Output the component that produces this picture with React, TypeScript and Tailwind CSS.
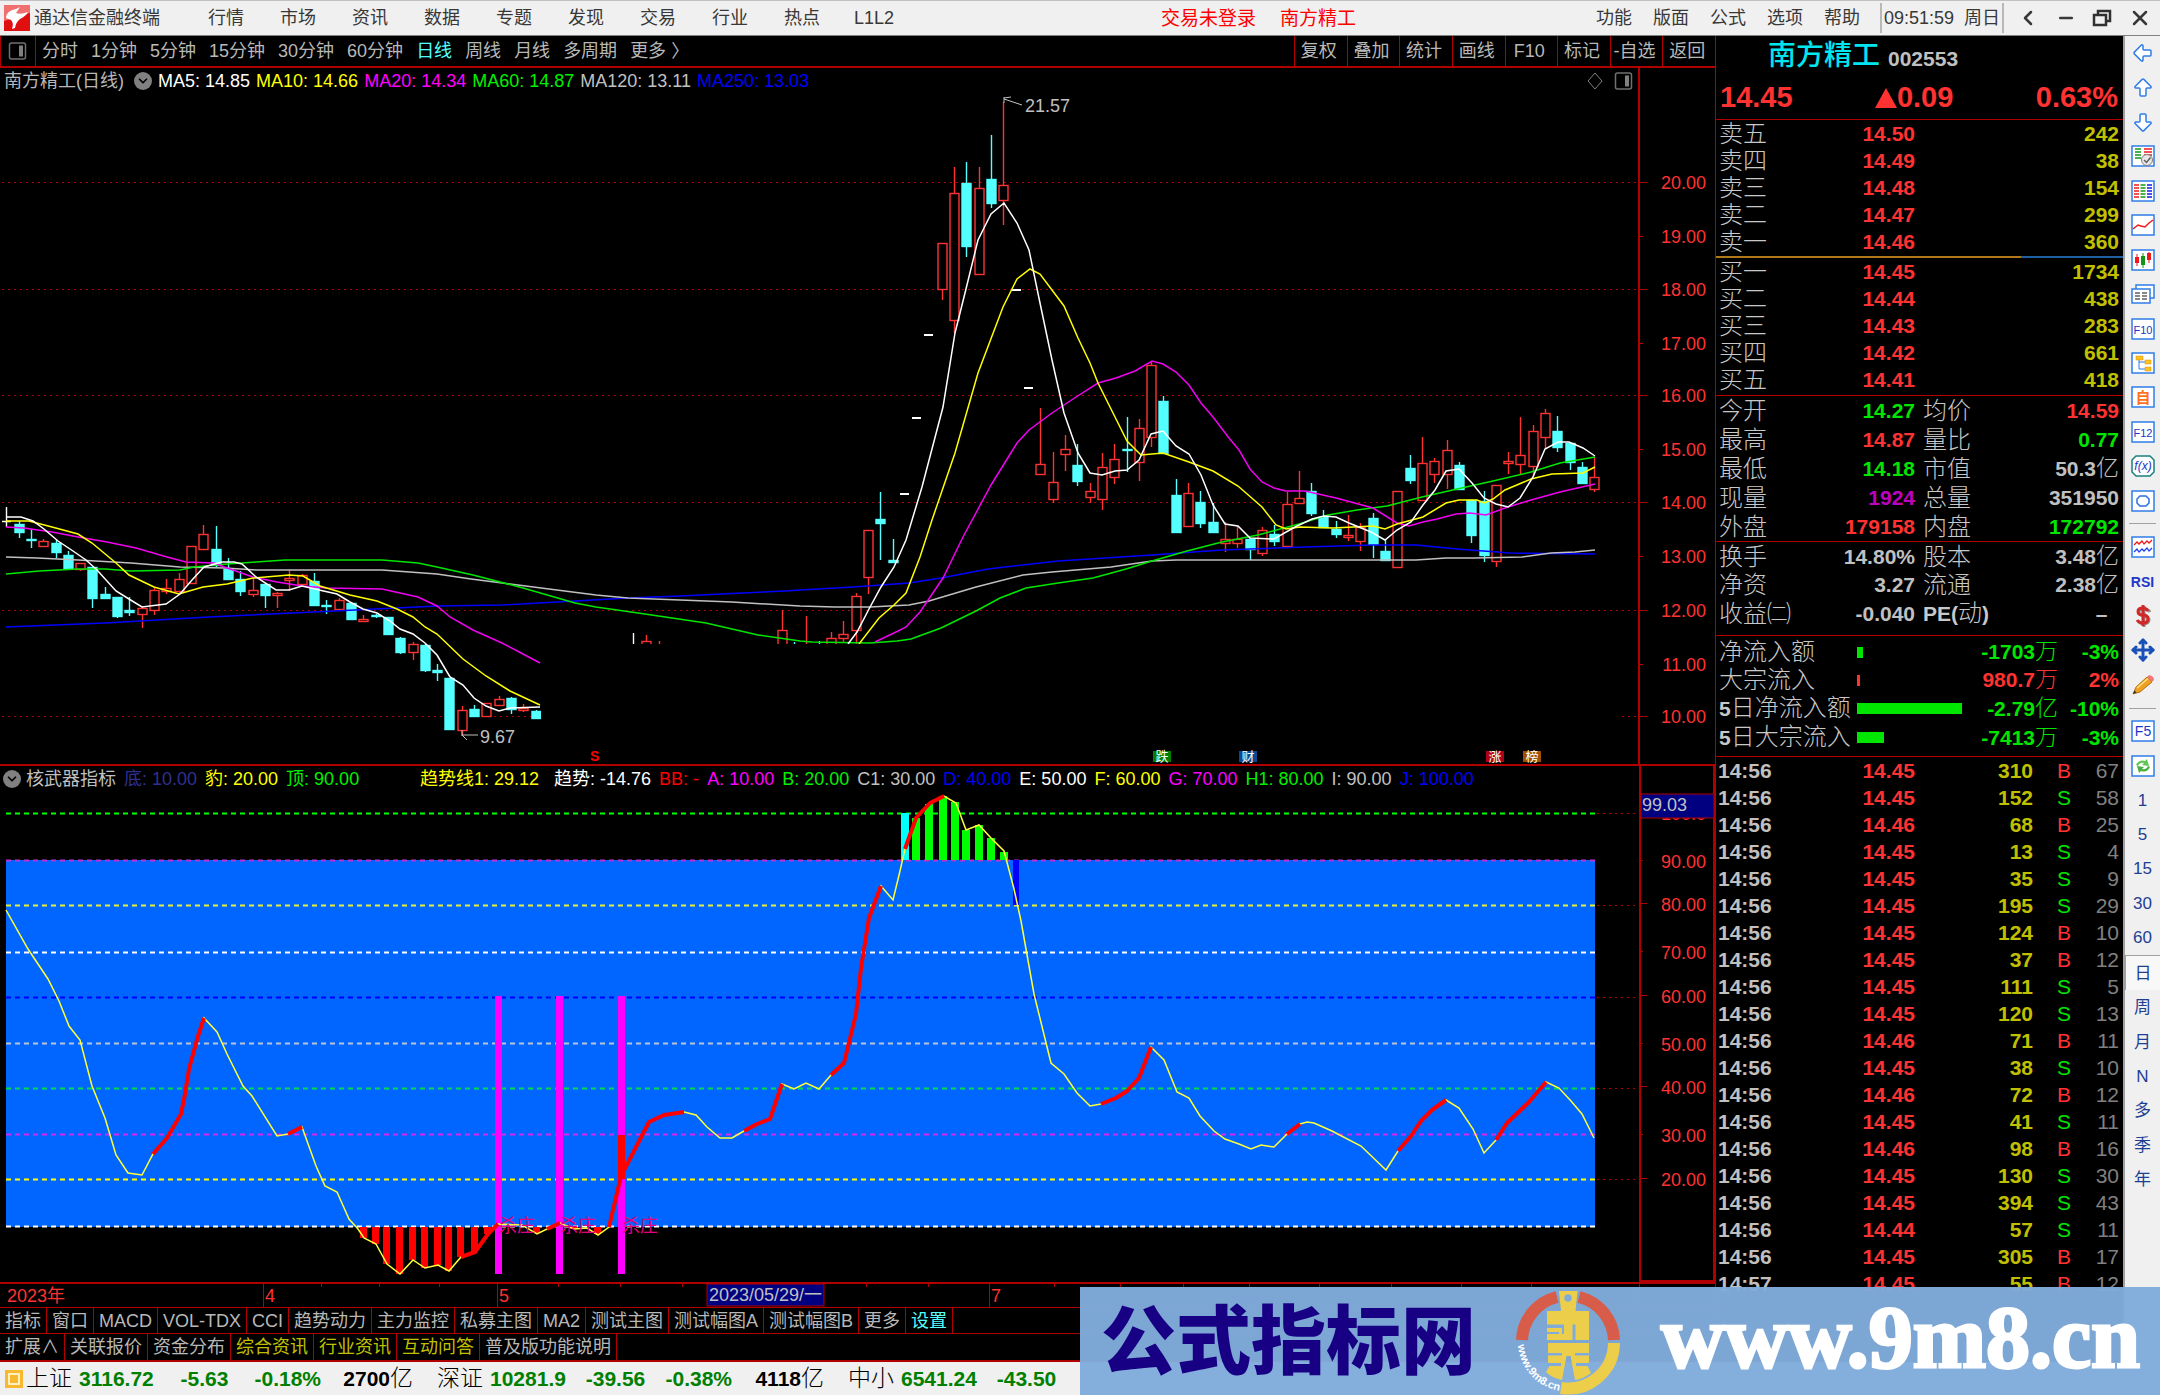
import type { ReactNode } from "react";
import { ArrowBigDown, ArrowBigLeft, ArrowBigUp, ChevronDown, ChevronLeft, Minus, Move, X } from "lucide-react";

const menuItems = ["行情", "市场", "资讯", "数据", "专题", "发现", "交易", "行业", "热点", "L1L2"];
const rightMenu = ["功能", "版面", "公式", "选项", "帮助"];
const periods = ["分时", "1分钟", "5分钟", "15分钟", "30分钟", "60分钟", "日线", "周线", "月线", "多周期", "更多 〉"];
const chartActions = ["复权", "叠加", "统计", "画线", "F10", "标记", "-自选", "返回"];

const maLegend = [
  { text: "MA5: 14.85", color: "text-white" },
  { text: "MA10: 14.66", color: "text-[#ffff00]" },
  { text: "MA20: 14.34", color: "text-[#ff00ff]" },
  { text: "MA60: 14.87", color: "text-[#00f000]" },
  { text: "MA120: 13.11", color: "text-[#c0c0c0]" },
  { text: "MA250: 13.03", color: "text-[#0000ff]" },
];

const indicatorLegend = [
  { text: "趋势线1: 29.12", color: "pr-[7px] text-[#ffff00]" },
  { text: "趋势: -14.76", color: "text-white" },
  { text: "BB: -", color: "text-[#ff0000]" },
  { text: "A: 10.00", color: "text-[#ff00ff]" },
  { text: "B: 20.00", color: "text-[#00f000]" },
  { text: "C1: 30.00", color: "text-[#c0c0c0]" },
  { text: "D: 40.00", color: "text-[#0000ff]" },
  { text: "E: 50.00", color: "text-white" },
  { text: "F: 60.00", color: "text-[#ffff00]" },
  { text: "G: 70.00", color: "text-[#ff00ff]" },
  { text: "H1: 80.00", color: "text-[#00f000]" },
  { text: "I: 90.00", color: "text-[#c0c0c0]" },
  { text: "J: 100.00", color: "text-[#0000ff]" },
];

const indicatorTabs = ["指标", "窗口", "MACD", "VOL-TDX", "CCI", "趋势动力", "主力监控", "私募主图", "MA2", "测试主图", "测试幅图A", "测试幅图B", "更多", "设置"];
const infoTabs = ["扩展∧", "关联报价", "资金分布", "综合资讯", "行业资讯", "互动问答", "普及版功能说明"];

const RED = "text-[#ff3232]";
const GREEN = "text-[#00e600]";
const GREY = "text-[#c0c0c0]";
const YELLOW = "text-[#c0c000]";

const sells = [
  ["卖五", "14.50", "242"],
  ["卖四", "14.49", "38"],
  ["卖三", "14.48", "154"],
  ["卖二", "14.47", "299"],
  ["卖一", "14.46", "360"],
];
const buys = [
  ["买一", "14.45", "1734"],
  ["买二", "14.44", "438"],
  ["买三", "14.43", "283"],
  ["买四", "14.42", "661"],
  ["买五", "14.41", "418"],
];

type StatRow = [string, string, string, string, string, string];
const stats: StatRow[] = [
  ["今开", "14.27", GREEN, "均价", "14.59", RED],
  ["最高", "14.87", RED, "量比", "0.77", GREEN],
  ["最低", "14.18", GREEN, "市值", "50.3亿", GREY],
  ["现量", "1924", "text-[#c000c0]", "总量", "351950", GREY],
  ["外盘", "179158", RED, "内盘", "172792", GREEN],
];
const fundamentals: StatRow[] = [
  ["换手", "14.80%", GREY, "股本", "3.48亿", GREY],
  ["净资", "3.27", GREY, "流通", "2.38亿", GREY],
  ["收益㈡", "-0.040", GREY, "PE(动)", "–  ", GREY],
];
const flows = [
  { label: "净流入额", width: 6, value: "-1703万", pct: "-3%", up: false },
  { label: "大宗流入", width: 3, value: "980.7万", pct: "2%", up: true },
  { label: "5日净流入额", width: 105, value: "-2.79亿", pct: "-10%", up: false },
  { label: "5日大宗流入", width: 27, value: "-7413万", pct: "-3%", up: false },
];
const ticks: [string, string, string, string, string][] = [
  ["14:56", "14.45", "310", "B", "67"],
  ["14:56", "14.45", "152", "S", "58"],
  ["14:56", "14.46", "68", "B", "25"],
  ["14:56", "14.45", "13", "S", "4"],
  ["14:56", "14.45", "35", "S", "9"],
  ["14:56", "14.45", "195", "S", "29"],
  ["14:56", "14.45", "124", "B", "10"],
  ["14:56", "14.45", "37", "B", "12"],
  ["14:56", "14.45", "111", "S", "5"],
  ["14:56", "14.45", "120", "S", "13"],
  ["14:56", "14.46", "71", "B", "11"],
  ["14:56", "14.45", "38", "S", "10"],
  ["14:56", "14.46", "72", "B", "12"],
  ["14:56", "14.45", "41", "S", "11"],
  ["14:56", "14.46", "98", "B", "16"],
  ["14:56", "14.45", "130", "S", "30"],
  ["14:56", "14.45", "394", "S", "43"],
  ["14:56", "14.44", "57", "S", "11"],
  ["14:56", "14.45", "305", "B", "17"],
  ["14:57", "14.45", "55", "B", "12"],
];

const indices = [
  { name: "上证", price: "3116.72", change: "-5.63", pct: "-0.18%", amount: "2700" },
  { name: "深证", price: "10281.9", change: "-39.56", pct: "-0.38%", amount: "4118" },
  { name: "中小", price: "6541.24", change: "-43.50" },
];

// [bar index, high, body top, body bottom, low, u = up (hollow) / d = down (filled)]
const candles: [number, number, number, number, number, "u" | "d"][] = [
  [1, 521, 524, 532, 538, "d"], [2, 529, 539, 540, 548, "d"], [3, 539, 541, 546, 547, "u"], [4, 540, 543, 552, 558, "d"],
  [5, 551, 555, 568, 570, "d"], [6, 563, 563, 569, 571, "u"], [7, 567, 567, 598, 608, "d"], [8, 587, 594, 598, 598, "d"],
  [9, 597, 597, 616, 618, "d"], [10, 597, 610, 612, 616, "d"], [11, 606, 608, 614, 628, "u"], [12, 588, 590, 610, 615, "u"],
  [13, 579, 588, 591, 594, "u"], [14, 573, 579, 591, 594, "u"], [15, 546, 546, 583, 583, "u"], [16, 525, 534, 549, 550, "u"],
  [17, 526, 549, 565, 567, "d"], [18, 558, 569, 579, 580, "d"], [19, 571, 579, 591, 596, "d"], [20, 577, 590, 594, 597, "u"],
  [21, 583, 584, 595, 608, "d"], [22, 592, 593, 595, 608, "u"], [23, 570, 578, 580, 591, "u"], [24, 574, 575, 584, 585, "u"],
  [25, 573, 581, 605, 605, "d"], [26, 600, 605, 606, 614, "d"], [27, 598, 600, 609, 610, "u"], [28, 603, 603, 619, 619, "d"],
  [29, 615, 619, 621, 621, "u"], [30, 614, 615, 616, 618, "d"], [31, 617, 617, 634, 634, "d"], [32, 637, 638, 652, 654, "d"],
  [33, 642, 644, 652, 660, "u"], [34, 644, 645, 670, 672, "d"], [35, 664, 670, 672, 681, "d"], [36, 678, 678, 729, 729, "d"],
  [37, 706, 710, 730, 736, "u"], [38, 705, 709, 716, 716, "d"], [39, 703, 703, 716, 716, "u"], [40, 696, 699, 705, 705, "u"],
  [41, 697, 698, 709, 714, "d"], [42, 704, 708, 710, 712, "u"], [43, 710, 711, 718, 718, "d"], [52, 635, 641, 660, 662, "u"],
  [53, 641, 650, 660, 660, "u"], [63, 610, 630, 650, 650, "u"], [64, 642, 650, 660, 660, "d"], [65, 616, 650, 655, 660, "u"],
  [66, 641, 650, 660, 660, "d"], [67, 632, 638, 646, 646, "u"], [68, 621, 634, 638, 642, "u"], [69, 593, 596, 630, 644, "u"],
  [70, 530, 530, 577, 594, "u"], [71, 492, 519, 523, 560, "d"], [72, 539, 560, 562, 562, "d"], [76, 243, 243, 289, 300, "u"],
  [77, 167, 193, 320, 333, "u"], [78, 162, 183, 246, 257, "d"], [79, 167, 188, 274, 274, "u"], [80, 135, 179, 203, 208, "d"],
  [81, 102, 185, 200, 225, "u"], [84, 408, 464, 474, 474, "u"], [85, 452, 482, 499, 503, "u"], [86, 435, 449, 454, 471, "u"],
  [87, 444, 465, 481, 486, "d"], [88, 483, 491, 497, 503, "u"], [89, 453, 467, 499, 510, "u"], [90, 444, 459, 477, 484, "u"],
  [91, 417, 449, 450, 472, "d"], [92, 419, 428, 462, 481, "u"], [93, 362, 365, 437, 447, "u"], [94, 396, 401, 453, 453, "d"],
  [95, 479, 495, 532, 532, "d"], [96, 483, 493, 526, 527, "u"], [97, 491, 502, 523, 528, "d"], [98, 503, 522, 532, 532, "d"],
  [99, 522, 539, 543, 552, "u"], [100, 526, 539, 543, 548, "u"], [101, 538, 539, 549, 560, "d"], [102, 527, 530, 553, 556, "u"],
  [103, 525, 534, 541, 546, "d"], [104, 492, 504, 546, 546, "u"], [105, 471, 498, 503, 503, "u"], [106, 483, 491, 513, 516, "d"],
  [107, 510, 517, 527, 527, "d"], [108, 521, 529, 534, 538, "d"], [109, 515, 535, 537, 541, "u"], [110, 523, 527, 541, 551, "u"],
  [111, 513, 518, 544, 558, "d"], [112, 540, 551, 560, 560, "d"], [113, 491, 491, 567, 567, "u"], [114, 455, 468, 480, 484, "d"],
  [115, 437, 463, 500, 501, "u"], [116, 458, 461, 474, 483, "u"], [117, 440, 450, 474, 489, "u"], [118, 462, 465, 489, 490, "d"],
  [119, 500, 500, 535, 543, "d"], [120, 491, 501, 555, 562, "d"], [121, 485, 485, 561, 567, "u"], [122, 452, 461, 463, 474, "u"],
  [123, 417, 455, 464, 474, "u"], [124, 425, 431, 466, 476, "u"], [125, 409, 413, 437, 448, "u"], [126, 416, 431, 447, 452, "d"],
  [127, 443, 443, 462, 470, "d"], [128, 462, 467, 483, 484, "d"], [129, 457, 477, 489, 492, "u"],
];

// limit-up / limit-down days print as a dash
const flatBars = [[904, 494], [916, 418], [928, 335], [1016, 290], [1028, 388]];

const maLines = [
  { color: "#0000ff", points: "6,627 105,623 209,617 314,612 437,606 502,605 575,601 628,598 680,596 785,591 800,590 853,587 909,583 941,578 988,569 1058,561 1152,555 1222,550 1305,547 1372,545 1416,545 1457,549 1510,553 1595,554" },
  { color: "#c0c0c0", points: "6,557 37,558 78,560 131,563 180,567 225,568 256,570 382,570 437,574 471,579 510,584 549,589 596,595 628,598 680,600 732,602 800,606 835,607 870,607 909,605 929,601 976,587 1023,575 1052,572 1111,567 1152,561 1176,560 1416,560 1446,558 1475,558 1522,557 1551,553 1575,552 1595,550" },
  { color: "#00e600", points: "6,574 39,571 78,569 105,569 131,571 180,570 194,567 227,564 256,562 285,560 382,560 418,563 437,567 473,575 523,588 575,603 596,607 638,613 706,623 758,635 800,641 812,642 870,643 897,641 911,639 941,628 976,611 1000,598 1026,588 1058,583 1093,578 1126,569 1152,561 1187,551 1222,542 1258,535 1299,524 1328,515 1357,510 1387,506 1422,497 1457,489 1493,481 1531,472 1560,463 1595,457" },
  { color: "#f000f0", points: "6,527 24,528 52,532 78,537 107,542 136,548 167,557 186,562 214,563 227,568 253,577 277,582 302,586 327,588 382,589 418,597 437,606 450,617 473,630 502,643 523,654 540,663" },
  { color: "#f000f0", points: "875,642 894,633 906,627 920,612 943,578 963,537 991,485 1017,443 1029,430 1052,413 1076,397 1098,383 1116,378 1135,371 1152,361 1163,364 1176,372 1189,385 1201,403 1213,417 1229,438 1239,450 1250,469 1262,482 1274,488 1286,491 1305,491 1336,498 1373,508 1397,523 1409,526 1423,522 1437,519 1456,514 1470,513 1486,515 1508,507 1531,500 1560,492 1595,484" },
  { color: "#ffff00", points: "6,521 29,521 52,527 78,534 92,543 116,563 129,575 154,587 179,594 203,587 227,584 253,578 289,575 303,576 320,586 350,595 377,601 397,609 413,617 425,627 437,634 463,659 486,676 510,691 540,705" },
  { color: "#ffff00", points: "859,644 879,618 894,605 906,593 920,557 932,520 955,453 978,373 1003,307 1017,279 1030,269 1040,274 1064,306 1078,338 1090,363 1098,383 1115,417 1127,441 1141,455 1163,453 1189,462 1213,471 1238,486 1262,507 1276,525 1286,529 1300,527 1333,528 1373,526 1385,529 1397,524 1423,517 1446,503 1459,500 1477,500 1484,503 1493,499 1505,490 1531,479 1552,474 1583,473 1595,467" },
  { color: "#ffffff", points: "6,517 21,517 33,521 44,529 58,541 73,551 86,560 97,570 116,591 129,599 142,607 166,604 180,594 192,580 204,567 222,562 234,562 242,564 256,577 276,590 289,590 302,586 319,590 337,594 350,602 363,609 377,613 390,621 400,629 413,634 425,643 437,655 450,677 463,685 474,698 486,706 499,711 510,708 540,707" },
  { color: "#ffffff", points: "848,644 857,632 869,609 881,587 894,567 906,540 922,487 943,407 955,333 965,293 978,240 991,214 1004,203 1017,223 1029,250 1040,303 1052,360 1064,413 1078,453 1090,473 1102,475 1115,471 1127,470 1139,460 1151,434 1163,431 1176,446 1189,454 1201,475 1213,505 1225,524 1238,526 1250,538 1274,539 1295,527 1312,519 1324,516 1336,517 1349,523 1371,532 1385,540 1397,530 1411,522 1423,505 1435,490 1446,471 1459,469 1472,483 1484,498 1496,504 1508,507 1520,498 1533,477 1545,449 1558,442 1569,442 1583,448 1595,456" },
];

const priceAxis = [
  ["20.00", 182], ["19.00", 236], ["18.00", 289], ["17.00", 343], ["16.00", 395], ["15.00", 449],
  ["14.00", 502], ["13.00", 556], ["12.00", 610], ["11.00", 664], ["10.00", 716],
] as const;

const eventTags = [
  { x: 1153, text: "跌", fill: "#008000" },
  { x: 1239, text: "财", fill: "#0a4a90" },
  { x: 1486, text: "涨", fill: "#b00018" },
  { x: 1523, text: "榜", fill: "#a05000" },
];

const levels = [
  { y: 812, color: "#00ff00" },
  { y: 859, color: "#c030d0" },
  { y: 904, color: "#e6f03c" },
  { y: 951, color: "#ffffff" },
  { y: 996, color: "#0000ff" },
  { y: 1042, color: "#b8c4d8" },
  { y: 1087, color: "#00dc50" },
  { y: 1133, color: "#d828f0" },
  { y: 1178, color: "#ffff00" },
  { y: 1225, color: "#ffffff" },
];
const levelAxis = [
  ["90.00", 861], ["80.00", 904], ["70.00", 952], ["60.00", 996], ["50.00", 1044], ["40.00", 1087], ["30.00", 1135], ["20.00", 1179],
] as const;

const trendLine =
  "6,909 28,948 48,978 59,1000 69,1025 80,1039 92,1085 105,1117 116,1154 128,1172 142,1174 153,1153 167,1137 181,1113 189,1068 198,1035 204,1017 217,1031 227,1053 243,1085 252,1095 277,1135 288,1133 302,1126 316,1165 325,1185 337,1191 349,1218 358,1228 364,1237 376,1243 387,1263 400,1273 413,1259 425,1267 438,1264 449,1270 461,1256 475,1251 488,1233 498,1223 522,1224 537,1233 547,1228 560,1222 574,1228 587,1227 598,1234 609,1226 621,1175 649,1121 664,1114 684,1111 696,1114 707,1126 720,1137 732,1137 744,1130 757,1123 770,1118 782,1083 794,1088 806,1082 819,1088 831,1074 844,1062 856,1013 861,967 869,917 881,885 893,899 900,870 905,848 916,817 930,802 944,795 956,802 966,829 979,824 991,837 1004,850 1014,888 1021,920 1034,993 1051,1062 1064,1073 1077,1092 1090,1105 1101,1103 1116,1097 1127,1090 1139,1077 1151,1046 1164,1059 1177,1091 1189,1097 1200,1115 1214,1130 1225,1138 1239,1143 1251,1148 1261,1144 1274,1146 1287,1133 1300,1123 1307,1121 1314,1122 1332,1130 1361,1145 1386,1169 1398,1150 1411,1135 1421,1120 1432,1109 1446,1099 1459,1107 1473,1128 1484,1152 1496,1139 1507,1122 1529,1101 1546,1081 1559,1087 1571,1100 1582,1113 1594,1137";
const risingRuns = [
  "153,1153 167,1137 181,1113 185,1093 189,1068 198,1035 204,1017",
  "288,1133 302,1126",
  "461,1256 475,1251 488,1233 498,1223",
  "547,1228 560,1222",
  "609,1226 621,1175 649,1121 664,1114 684,1111",
  "744,1130 757,1123 770,1118 782,1083",
  "831,1074 844,1062 856,1013 861,967 869,917 881,885",
  "905,848 916,817 930,802 944,795",
  "1101,1103 1116,1097 1127,1090 1139,1077 1151,1046",
  "1287,1133 1300,1123",
  "1398,1150 1411,1135 1421,1120 1432,1109 1446,1099",
  "1496,1139 1507,1122 1529,1101 1546,1081",
];
const bottomBars = [[364, 1237], [376, 1243], [387, 1263], [400, 1273], [413, 1259], [425, 1267], [438, 1264], [449, 1270], [461, 1256], [475, 1251], [488, 1233], [537, 1232], [574, 1228], [598, 1233]];
const topBars = [[916, 817], [929, 803], [943, 795], [955, 801], [966, 829], [979, 824], [991, 837], [1004, 851]];
const signalBars = [495, 556, 618];

const barX = (i: number) => Math.round(6.3 + i * 12.31) + 0.5;

function Candles() {
  return (
    <g strokeWidth={1.4}>
      {candles.map(([i, high, top, bottom, low, kind]) => {
        const x = barX(i);
        const color = kind === "u" ? "#ff3232" : "#54ffff";
        const h = Math.max(bottom - top, 1);
        return (
          <g key={i} stroke={color} fill={kind === "u" ? "#000" : color}>
            <line x1={x} x2={x} y1={high} y2={low} />
            <rect x={x - 4.5} y={top + 0.5} width={9} height={h} />
          </g>
        );
      })}
      {flatBars.map(([x, y]) => (
        <rect key={x} x={x - 4} y={y - 1} width={9} height={2} fill="#fff" />
      ))}
      <path d="M6.5 507v20M2 521.5h9M633.5 633v12" stroke="#fff" />
    </g>
  );
}

function PriceChart() {
  return (
    <svg viewBox="0 94 1715 670" className="block w-full" role="img" aria-label="日线">
      <defs>
        <clipPath id="plot">
          <path d="M0 94H1639V644H541V764H0Z" />
        </clipPath>
      </defs>
      <g stroke="#b00000" strokeDasharray="2 4">
        {[182, 289, 395, 502, 610].map((y) => (
          <line key={y} x1={2} x2={1639} y1={y + 0.5} y2={y + 0.5} />
        ))}
        <line x1={2} x2={541} y1={716.5} y2={716.5} />
        <line x1={1622} x2={1639} y1={716.5} y2={716.5} />
      </g>
      <line x1={1639} x2={1639} y1={94} y2={764} stroke="#b00000" strokeWidth={2} />
      {priceAxis.map(([label, y], i) => (
        <g key={label}>
          <line x1={1639} x2={i % 2 ? 1643 : 1647} y1={y + 0.5} y2={y + 0.5} stroke="#b00000" />
          <text x={1706} y={y + 7} textAnchor="end" fontSize={18} fill="#ff3232">{label}</text>
        </g>
      ))}
      <g clipPath="url(#plot)">
        <Candles />
        {maLines.map((line) => (
          <polyline key={line.points} points={line.points} fill="none" stroke={line.color} strokeWidth={1.5} />
        ))}
      </g>
      <g stroke="#c0c0c0" fill="none">
        <path d="M1004 97v6M1004 99l18 6M1004 98l7-1" />
        <path d="M462 730v6M462 735h16M462 735l5 5" />
      </g>
      <text x={1025} y={112} fontSize={18} fill="#c0c0c0">21.57</text>
      <text x={480} y={743} fontSize={18} fill="#c0c0c0">9.67</text>
      <text x={590} y={761} fontSize={14} fontWeight="bold" fill="#ff0000">S</text>
      {eventTags.map((tag) => (
        <g key={tag.text}>
          <rect x={tag.x} y={751} width={18} height={11} fill={tag.fill} />
          <text x={tag.x + 9} y={761} fontSize={13} textAnchor="middle" fill="#fff">{tag.text}</text>
        </g>
      ))}
    </svg>
  );
}

function IndicatorChart() {
  return (
    <svg viewBox="0 790 1715 491" className="block w-full" role="img" aria-label="核武器指标">
      <rect x={6} y={859} width={1589} height={367} fill="#0066ff" />
      <g stroke="#b00000" strokeDasharray="2 4">
        {[812, 904, 996, 1087, 1178].map((y) => (
          <line key={y} x1={1597} x2={1639} y1={y + 0.5} y2={y + 0.5} />
        ))}
      </g>
      {levels.map((level) => (
        <line key={level.y} x1={6} x2={1595} y1={level.y + 0.5} y2={level.y + 0.5} stroke={level.color} strokeWidth={2} strokeDasharray="5 4" />
      ))}
      {signalBars.map((x) => (
        <rect key={x} x={x} y={995} width={7} height={278} fill="#ff00ff" />
      ))}
      <rect x={618} y={1134} width={7} height={44} fill="#ff0000" />
      {bottomBars.map(([x, y]) => (
        <rect key={x} x={x - 4} y={1226} width={7} height={y - 1226} fill="#ff0000" />
      ))}
      {topBars.map(([x, y]) => (
        <rect key={x} x={x - 4} y={y} width={8} height={859 - y} fill="#00ff00" />
      ))}
      <rect x={901} y={812} width={8} height={47} fill="#00ffff" />
      <rect x={1013} y={859} width={6} height={45} fill="#0000ff" />
      <polyline points={trendLine} fill="none" stroke="#ffff3c" strokeWidth={1.5} />
      {risingRuns.map((run) => (
        <polyline key={run} points={run} fill="none" stroke="#ff0000" strokeWidth={4} strokeLinejoin="round" />
      ))}
      {signalBars.map((x) => (
        <text key={x} x={x + 4} y={1231} fontSize={18} fill="#e00080">杀庄</text>
      ))}
      <path d="M1640 790V1280H1714V790" fill="none" stroke="#b00000" strokeWidth={2} />
      <text x={1706} y={819} textAnchor="end" fontSize={18} fill="#ff3232">100.0</text>
      {levelAxis.map(([label, y], i) => (
        <g key={label}>
          <line x1={1639} x2={i % 2 ? 1647 : 1643} y1={y - 1.5} y2={y - 1.5} stroke="#b00000" />
          <text x={1706} y={y + 6} textAnchor="end" fontSize={18} fill="#ff3232">{label}</text>
        </g>
      ))}
      <rect x={1641} y={793} width={73} height={24} fill="#000080" stroke="#b00000" />
      <text x={1642} y={810} fontSize={18} fill="#c0c0c0">99.03</text>
    </svg>
  );
}

function TimeAxis() {
  return (
    <svg viewBox="0 1281 1715 25" className="block w-full" role="img" aria-label="2023">
      <g stroke="#b00000">
        <line x1={0} x2={1715} y1={1282} y2={1282} strokeWidth={2} />
        <path d="M263.500 1282v24M497.500 1282v24M989.500 1282v24M1639.500 1282v24" />
        <path d="M321.500 1282v4M379.500 1282v4M439.500 1282v4M558.500 1282v4M620.500 1282v4M682.500 1282v4M866.500 1282v4M928.500 1282v4M1054.500 1282v4M1120.500 1282v4M1183.500 1282v4M1249.500 1282v4M1319.500 1282v4M1391.500 1282v4M1461.500 1282v4M1531.500 1282v4" />
      </g>
      <g fontSize={18} fill="#ff3232">
        <text x={7} y={1301}>2023年</text>
        <text x={265} y={1301}>4</text>
        <text x={499} y={1301}>5</text>
        <text x={991} y={1301}>7</text>
      </g>
      <rect x={707} y={1283} width={117} height={22} fill="#000080" stroke="#b00000" />
      <text x={709} y={1300} fontSize={18} fill="#c0c0c0">2023/05/29/一</text>
    </svg>
  );
}

function PanelIcon() {
  return (
    <svg viewBox="0 0 20 18" className="h-[18px] w-5" aria-hidden="true">
      <rect x="1.500" y="1" width="16" height="16" rx="2" fill="none" stroke="#707070" strokeWidth="1.500" />
      <rect x="11" y="3.500" width="4" height="11" fill="#808080" />
    </svg>
  );
}

function RoundChevron() {
  return (
    <button aria-label="展开" className="flex h-[18px] w-[18px] shrink-0 items-center justify-center rounded-full bg-[#808080] text-black">
      <ChevronDown className="h-3.5 w-3.5" strokeWidth={3} />
    </button>
  );
}

function Frame({ children }: { children?: ReactNode }) {
  return (
    <svg viewBox="0 0 24 22" className="h-[22px] w-6" fill="none" aria-hidden="true">
      <rect x="1" y="1" width="22" height="20" fill="#fff" stroke="#2f7de8" strokeWidth="1.500" />
      {children}
    </svg>
  );
}

function KeyIcon({ text }: { text: string }) {
  return (
    <Frame>
      <text x="12" y="16" textAnchor="middle" fontSize={text.length > 2 ? 11 : 14} fill="#1838c8">{text}</text>
    </Frame>
  );
}

const toolIcons: { name: string; icon: ReactNode }[] = [
  { name: "后退", icon: <ArrowBigLeft className="h-6 w-6 fill-white text-[#2f7de8]" strokeWidth={1.5} /> },
  { name: "上一个", icon: <ArrowBigUp className="h-6 w-6 fill-white text-[#2f7de8]" strokeWidth={1.5} /> },
  { name: "下一个", icon: <ArrowBigDown className="h-6 w-6 fill-white text-[#2f7de8]" strokeWidth={1.5} /> },
  {
    name: "自选股",
    icon: (
      <Frame>
        <path d="M4 4h6M4 7h6M4 10h6M4 13h6" stroke="#149614" strokeWidth="1.500" />
        <path d="M13 4h8M13 7h8M13 10h8" stroke="#f01818" strokeWidth="1.500" />
        <circle cx="16" cy="15" r="5.500" fill="#e8e8e8" stroke="#808080" />
        <path d="M13 15l2.500 2.500 4-5" stroke="#606060" strokeWidth="1.500" />
      </Frame>
    ),
  },
  {
    name: "行情表",
    icon: (
      <Frame>
        <path d="M3 5h5M3 8h5M3 11h5M3 14h5M3 17h5" stroke="#f01818" strokeWidth="1.500" />
        <path d="M9.500 5h5M9.500 8h5M9.500 11h5M9.500 14h5M9.500 17h5" stroke="#149614" strokeWidth="1.500" />
        <path d="M16 5h5M16 8h5M16 11h5M16 14h5M16 17h5" stroke="#1818f0" strokeWidth="1.500" />
      </Frame>
    ),
  },
  { name: "分时图", icon: <Frame><path d="M2 15l5-4 3 1 4 1 4-4 4-3" stroke="#f01818" strokeWidth="1.500" /></Frame> },
  {
    name: "K线图",
    icon: (
      <Frame>
        <path d="M6 5v12M18 3v11" stroke="#f01818" />
        <path d="M12 4v15" stroke="#149614" />
        <path d="M4 8h4v6H4zM16 4h4v7h-4z" fill="#f01818" />
        <path d="M10 7h4v9h-4z" fill="#149614" />
      </Frame>
    ),
  },
  {
    name: "多窗口",
    icon: (
      <svg viewBox="0 0 24 22" className="h-[22px] w-6" fill="#fff" aria-hidden="true">
        <rect x="5" y="2" width="18" height="13" stroke="#2f7de8" strokeWidth="1.500" />
        <rect x="1" y="6" width="18" height="14" stroke="#2f7de8" strokeWidth="1.500" />
        <path d="M4 10h5M4 13h5M4 16h5M11 10h5M11 13h5M11 16h5" stroke="#606060" strokeWidth="1.500" />
      </svg>
    ),
  },
  { name: "F10", icon: <KeyIcon text="F10" /> },
  {
    name: "板块",
    icon: (
      <Frame>
        <path d="M8 6v11h8M8 10h8" stroke="#2f7de8" />
        <path d="M5 4h7v4H5zM14 8h6v4h-6zM14 15h6v4h-6z" fill="#ffc020" stroke="#d09000" strokeWidth=".5" />
      </Frame>
    ),
  },
  {
    name: "自选",
    icon: (
      <Frame>
        <text x="12" y="17" textAnchor="middle" fontSize="15" fontWeight="bold" fill="#ff7020">自</text>
      </Frame>
    ),
  },
  { name: "F12", icon: <KeyIcon text="F12" /> },
  {
    name: "公式",
    icon: (
      <svg viewBox="0 0 24 22" className="h-[22px] w-6" aria-hidden="true">
        <path d="M5 1h14l4 4v12l-4 4H5l-4-4V5z" fill="#fff" stroke="#188080" strokeWidth="1.500" />
        <text x="12" y="15" textAnchor="middle" fontSize="12" fontStyle="italic" fill="#1838c8">f(x)</text>
      </svg>
    ),
  },
  { name: "圆", icon: <Frame><path d="M9 6h6l3 3v4l-3 3H9l-3-3V9z" stroke="#2a70e0" strokeWidth="1.500" /></Frame> },
  { name: "sep", icon: null },
  {
    name: "多指标",
    icon: (
      <Frame>
        <path d="M3 9l3-3 2 2 3-3 2 3 3-3 2 2 3-3" stroke="#f01818" strokeWidth="1.300" />
        <path d="M3 16l3-3 2 3 3-3 2 2 3-3 2 3 3-3" stroke="#2040f0" strokeWidth="1.300" />
      </Frame>
    ),
  },
  { name: "RSI", icon: <span className="text-sm font-bold text-[#2038c8]">RSI</span> },
  {
    name: "资金",
    icon: (
      <svg viewBox="0 0 24 24" className="h-6 w-6" fill="none" aria-hidden="true">
        <path d="M19 8q-2-3-6-3-5 0-5 3t5 4 5 4-5 4q-4 0-6-3M13 2v21" stroke="#909090" strokeWidth="3" />
        <path d="M17 7q-2-3-5-3-5 0-5 3.500T12 11t5 4-5 4q-4 0-6-3M12 1v21" stroke="#d02828" strokeWidth="3" />
      </svg>
    ),
  },
  { name: "移动", icon: <Move className="h-6 w-6 text-[#1850b8]" strokeWidth={3} /> },
  {
    name: "画笔",
    icon: (
      <svg viewBox="0 0 24 22" className="h-[22px] w-6" aria-hidden="true">
        <path d="M2 20l3-7L16 3l5 5L9 18z" fill="#f0a020" stroke="#a06000" strokeWidth=".8" />
        <path d="M16 3l2-2q5 1 5 5l-2 2z" fill="#f07878" />
        <path d="M2 20l1.500-3.500 2 2z" fill="#303030" />
        <path d="M6 14L17 4.500" stroke="#ffe080" strokeWidth="1.500" />
      </svg>
    ),
  },
  { name: "sep", icon: null },
  { name: "F5", icon: <KeyIcon text="F5" /> },
  {
    name: "刷新",
    icon: (
      <Frame>
        <path d="M5 10q3-6 9-4l2-2 2 7-7-1 2-2q-4-1-6 3z" fill="#60c850" />
        <path d="M19 12q-3 6-9 4l-2 2-2-7 7 1-2 2q4 1 6-3z" fill="#48b040" />
      </Frame>
    ),
  },
  ...["1", "5", "15", "30", "60", "日", "周", "月", "N", "多", "季", "年"].map((name) => ({
    name,
    icon: <span className="text-[17px] text-[#1c3f94]">{name}</span>,
  })),
];

function ToolStrip() {
  return (
    <aside className="w-[37px] shrink-0 border-l-2 border-[#a0a0a0] bg-[#f0f0f0]">
      <div className="flex h-[1161px] flex-col">
        {toolIcons.map(({ name, icon }, i) =>
          name === "sep" ? (
            <div key={i} className="mx-1 flex h-3 items-center">
              <hr className="w-full border-[#a0a0a0]" />
            </div>
          ) : (
            <button
              key={name}
              aria-label={name}
              className={`flex flex-1 items-center justify-center leading-none ${name === "日" ? "border-t border-l border-[#a0a0a0] bg-[#f8f8f8]" : ""}`}
            >
              {icon}
            </button>
          )
        )}
      </div>
    </aside>
  );
}

// digits are bold, the trailing unit is a larger thin glyph
function Figure({ text }: { text: string }) {
  const unit = /[亿万]$/.test(text) ? text.slice(-1) : "";
  return (
    <>
      {unit ? text.slice(0, -1) : text}
      {unit && <span className="text-[23px] leading-none font-light">{unit}</span>}
    </>
  );
}

const panelLabel = "p-0 text-left text-[24px] font-light whitespace-nowrap text-[#c8c8c8]";

function OrderTable({ rows }: { rows: string[][] }) {
  return (
    <table className="w-full table-fixed border-collapse text-[21px] leading-[27px] font-bold">
      <tbody>
        {rows.map(([name, price, volume]) => (
          <tr key={name} className="h-[27px]">
            <th scope="row" className={`w-[84px] ${panelLabel}`}>{name}</th>
            <td className={`w-[112px] p-0 text-right ${RED}`}>{price}</td>
            <td className={`p-0 text-right ${YELLOW}`}>{volume}</td>
          </tr>
        ))}
      </tbody>
    </table>
  );
}

function StatTable({ rows, rowClass }: { rows: StatRow[]; rowClass: string }) {
  return (
    <table className="w-full table-fixed border-collapse text-[21px] leading-[28px] font-bold">
      <tbody>
        {rows.map(([a, av, ac, b, bv, bc]) => (
          <tr key={a} className={rowClass}>
            <th scope="row" className={`w-[84px] ${panelLabel}`}>{a}</th>
            <td className={`w-[112px] p-0 text-right ${ac}`}>{av}</td>
            <th scope="row" className={`w-[88px] ${panelLabel}`}>
              <span className="pl-2">
                {b === "PE(动)" ? (
                  <>
                    <span className="text-[21px] font-bold">PE(</span>动<span className="text-[21px] font-bold">)</span>
                  </>
                ) : (
                  b
                )}
              </span>
            </th>
            <td className={`p-0 text-right whitespace-pre ${bc}`}><Figure text={bv} /></td>
          </tr>
        ))}
      </tbody>
    </table>
  );
}

function QuotePanel() {
  return (
    <section className="w-[408px] shrink-0 border-l border-[#b00000]">
      <div className="flex h-10 items-center gap-2 pl-[52px]">
        <h1 className="text-[28px] leading-none font-medium text-[#00e6f0]">南方精工</h1>
        <span className="pt-1 text-[21px] font-bold text-[#c0c0c0]">002553</span>
      </div>
      <div className={`flex h-[43px] items-center justify-between pr-[5px] pl-1 text-[29px] font-bold ${RED}`}>
        <span>14.45</span>
        <span className="flex items-center">
          <svg viewBox="0 0 22 20" className="h-5 w-[22px]" aria-hidden="true"><path d="M11 0L22 20H0z" fill="#ff3232" /></svg>
          0.09
        </span>
        <span>0.63%</span>
      </div>
      <div className="border-t border-[#b00000] pr-1 pb-px pl-[3px]"><OrderTable rows={sells} /></div>
      <div className="flex h-0.5">
        <div className="w-3/4 bg-[#b07818]" />
        <div className="w-1/4 bg-[#2060a0]" />
      </div>
      <div className="pr-1 pb-0.5 pl-[3px]"><OrderTable rows={buys} /></div>
      <div className="border-t border-[#b00000] pr-1 pl-[3px]"><StatTable rows={stats} rowClass="h-[29px]" /></div>
      <div className="border-t border-[#b00000] pt-px pr-1 pb-[7px] pl-[3px]"><StatTable rows={fundamentals} rowClass="h-[28px]" /></div>
      <div className="border-t border-[#b00000] pt-0.5 pr-1 pb-1 pl-[3px]">
        <table className="w-full table-fixed border-collapse text-[21px] leading-[28px] font-bold">
          <tbody>
            {flows.map((flow) => (
              <tr key={flow.label} className={`h-[28px] ${flow.up ? RED : GREEN}`}>
                <th scope="row" className={`w-[138px] ${panelLabel}`}>
                  {flow.label.startsWith("5") && <span className="text-[21px] font-bold">5</span>}
                  {flow.label.replace("5", "")}
                </th>
                <td className="w-[108px] p-0">
                  <div className={`h-[11px] ${flow.up ? "bg-[#ff3232]" : "bg-[#00e600]"}`} style={{ width: flow.width }} />
                </td>
                <td className="w-[93px] p-0 text-right whitespace-nowrap"><Figure text={flow.value} /></td>
                <td className="p-0 text-right">{flow.pct}</td>
              </tr>
            ))}
          </tbody>
        </table>
      </div>
      <div className="border-t border-[#b00000] pr-1 pl-0.5">
        <table className="w-full table-fixed border-collapse text-[21px] leading-[27px] font-bold">
          <tbody>
            {ticks.map(([time, price, volume, side, count], i) => (
              <tr key={i} className="h-[27px]">
                <td className={`w-[84px] p-0 ${GREY}`}>{time}</td>
                <td className={`w-[113px] p-0 text-right ${RED}`}>{price}</td>
                <td className={`w-[118px] p-0 text-right ${YELLOW}`}>{volume}</td>
                <td className={`w-[62px] p-0 text-center font-normal ${side === "B" ? RED : GREEN}`}>{side}</td>
                <td className="p-0 text-right font-normal text-[#808080]">{count}</td>
              </tr>
            ))}
          </tbody>
        </table>
      </div>
    </section>
  );
}

function Banner() {
  return (
    <div className="absolute right-0 bottom-0 flex h-[109px] w-1/2 items-center justify-between bg-[#80abdb]/97 pr-5 pl-[21px]">
      <span className="pb-3 font-['Noto_Sans_CJK_SC',sans-serif] text-[75px] leading-none font-black whitespace-nowrap text-[#180084]">公式指标网</span>
      <svg viewBox="0 0 106 108" className="h-[108px] w-[106px] shrink-0" aria-label="9m8">
        <g fill="none" strokeWidth="12">
          <path d="M7 52A46 46 0 0 1 42 9" stroke="#d85c4a" />
          <path d="M64 9A46 46 0 0 1 99 52" stroke="#d85c4a" />
          <path d="M99 55A46 46 0 0 1 46 100" stroke="#ecce4a" />
        </g>
        <g fill="#ecce4a">
          <path d="M44 3h18.500l-2 20H74v29H32V23h14z" />
          <path d="M33 55h41v19l-2 3 4 8q-8 6-16 7L55.500 68h-4L47 92q-10-2-16-8l4-7-2-3z" />
        </g>
        <g fill="#80abdb">
          <circle cx="53" cy="10" r="3.700" />
          <path d="M32 36.500h17V46h-2v-6H32zM32 44h12v2H32zM57.500 36.500h3V52h-3z" />
          <path d="M32 65h15v2.500H32zM60 65h15v2.500H60zM32 75h14v3H32zM61 75h14v3H61z" />
        </g>
        <path id="ring" d="M3 57A50 50 0 0 0 46 103" fill="none" />
        <text fontSize="11" fontWeight="bold" fill="#fff">
          <textPath href="#ring">www.9m8.cn</textPath>
        </text>
      </svg>
      <span className="pb-2 font-['Liberation_Serif',serif] text-[88px] leading-none font-bold text-white [-webkit-text-stroke:3px_#fff]">www.9m8.cn</span>
    </div>
  );
}

export default function App() {
  return (
    <div className="relative flex min-h-screen flex-col overflow-hidden bg-black font-['Liberation_Sans','Noto_Sans_CJK_SC',sans-serif] text-[18px] leading-none text-[#b8b8b8]">
      <header className="flex h-9 items-center border-t border-b border-t-[#c0c0c0] border-b-[#808080] bg-[#f0f0f0] text-[#383838]">
        <svg viewBox="0 0 26 26" className="mr-1 ml-1 h-[26px] w-[26px] shrink-0" aria-hidden="true">
          <rect width="26" height="26" fill="#e01010" />
          <path d="M0 0h26v8L0 16z" fill="#f07070" />
          <path d="M2 13Q2 6 12 4l4-2-4 6q4 2 12-1-2 4-8 7-4 3-5 9l-3 1q2-6-1-9-3-1-5-2z" fill="#fff" />
        </svg>
        <span className="w-[156px]">通达信金融终端</span>
        <nav className="flex">
          {menuItems.map((item) => (
            <button key={item} className="w-[72px] text-center">{item}</button>
          ))}
        </nav>
        <div className="flex flex-1 gap-6 pl-[251px] text-[19px] text-[#ff0000]">
          <a href="#login">交易未登录</a>
          <a href="#stock">南方精工</a>
        </div>
        <nav className="flex gap-[21px] pr-5">
          {rightMenu.map((item) => (
            <button key={item}>{item}</button>
          ))}
        </nav>
        <div className="flex h-[30px] items-center gap-2.5 border-r-2 border-l-2 border-[#b8b8b8] px-0.5">
          <time>09:51:59</time>
          <span>周日</span>
        </div>
        <div className="flex w-[156px] items-center justify-between pr-2 pl-3">
          <button aria-label="收起"><ChevronLeft className="h-6 w-6" strokeWidth={2.5} /></button>
          <button aria-label="最小化"><Minus className="h-5 w-5" strokeWidth={3} /></button>
          <button aria-label="还原">
            <svg viewBox="0 0 20 20" className="h-5 w-5" fill="none" stroke="#303030" strokeWidth="2.500" aria-hidden="true">
              <path d="M2 7h12v10H2zM6 7V3h12v10h-4" />
            </svg>
          </button>
          <button aria-label="关闭"><X className="h-6 w-6" strokeWidth={2.5} /></button>
        </div>
      </header>

      <main className="flex flex-1">
        <div className="flex min-w-0 flex-1 flex-col">
          <div className="flex h-8 items-stretch border-b-2 border-[#b00000]">
            <button aria-label="侧栏" className="flex w-9 items-center justify-center border-r border-l border-[#b00000]">
              <PanelIcon />
            </button>
            <nav className="flex flex-1 items-center gap-[13px] pl-1.5 whitespace-nowrap">
              {periods.map((period) => (
                <button key={period} className={period === "日线" ? "text-[#54ffff]" : ""}>{period}</button>
              ))}
            </nav>
            <div className="flex w-[421px]">
              {chartActions.map((action) => (
                <button key={action} className="flex-1 border-l border-[#b00000] pr-1 whitespace-nowrap">{action}</button>
              ))}
            </div>
          </div>

          <div className="flex h-[26px]">
            <div className="flex flex-1 items-center gap-1.5 pl-1 whitespace-nowrap">
              <span className="pr-1">南方精工(日线)</span>
              <RoundChevron />
              {maLegend.map((item) => (
                <span key={item.text} className={item.color}>{item.text}</span>
              ))}
              <div className="ml-auto flex items-center gap-2.5 pr-1">
                <svg viewBox="0 0 18 18" className="h-[18px] w-[18px]" aria-hidden="true">
                  <path d="M9 1l7 8-7 8-7-8z" fill="none" stroke="#808080" />
                </svg>
                <PanelIcon />
              </div>
            </div>
            <div className="w-[77px] border-l-2 border-[#b00000]" />
          </div>
          <PriceChart />

          <div className="flex h-[27px] border-t-2 border-[#b00000]">
            <div className="flex flex-1 items-center gap-2 pl-[3px] whitespace-nowrap">
              <div className="flex w-[409px] shrink-0 items-center gap-2">
                <div className="flex items-center gap-[5px]">
                  <RoundChevron />
                  <span className="text-[#c0c0c0]">核武器指标</span>
                </div>
                <span className="text-[#303090]">底: 10.00</span>
                <span className="text-[#ffff00]">豹: 20.00</span>
                <span className="text-[#00f000]">顶: 90.00</span>
              </div>
              {indicatorLegend.map((item) => (
                <span key={item.text} className={item.color}>{item.text}</span>
              ))}
            </div>
            <div className="w-[76px] border-x-2 border-[#b00000]" />
          </div>
          <IndicatorChart />
          <TimeAxis />

          <nav className="flex h-[26px] border-t border-[#b00000]">
            {indicatorTabs.map((tab) => (
              <button key={tab} className={`border-r border-[#b00000] px-[5px] whitespace-nowrap ${tab === "设置" ? "text-[#54ffff]" : ""}`}>{tab}</button>
            ))}
          </nav>
          <nav className="flex h-[29px] border-t border-b-2 border-[#b00000]">
            {infoTabs.map((tab, i) => (
              <button key={tab} className={`border-r border-[#b00000] px-[5px] whitespace-nowrap ${i > 2 && i < 6 ? "text-[#c0c000]" : ""}`}>{tab}</button>
            ))}
          </nav>
        </div>
        <QuotePanel />
        <ToolStrip />
      </main>

      <footer className="flex h-[34px] items-center gap-6 border-b border-[#203040] bg-[#f0f0f0] text-[21px] whitespace-nowrap text-black">
        <svg viewBox="0 0 20 20" className="-mr-6 ml-0.5 h-5 w-6" aria-hidden="true">
          <rect x="1" y="1" width="18" height="18" fill="#f8b830" />
          <rect x="4" y="4" width="12" height="12" fill="#fff0c0" />
          <rect x="6" y="6" width="8" height="8" fill="#f8b830" />
        </svg>
        {indices.map((index) => (
          <div key={index.name} className="flex items-center font-bold text-[#008000]">
            <span className="w-[53px] text-[23px] font-light text-black">{index.name}</span>
            <span className="w-[77px]">{index.price}</span>
            <span className="w-[97px] text-center">{index.change}</span>
            {index.pct && <span className="w-[68px] text-right">{index.pct}</span>}
            {index.amount && (
              <span className="w-[92px] text-right text-black">
                {index.amount}
                <span className="text-[23px] font-light">亿</span>
              </span>
            )}
          </div>
        ))}
      </footer>
      <Banner />
    </div>
  );
}
